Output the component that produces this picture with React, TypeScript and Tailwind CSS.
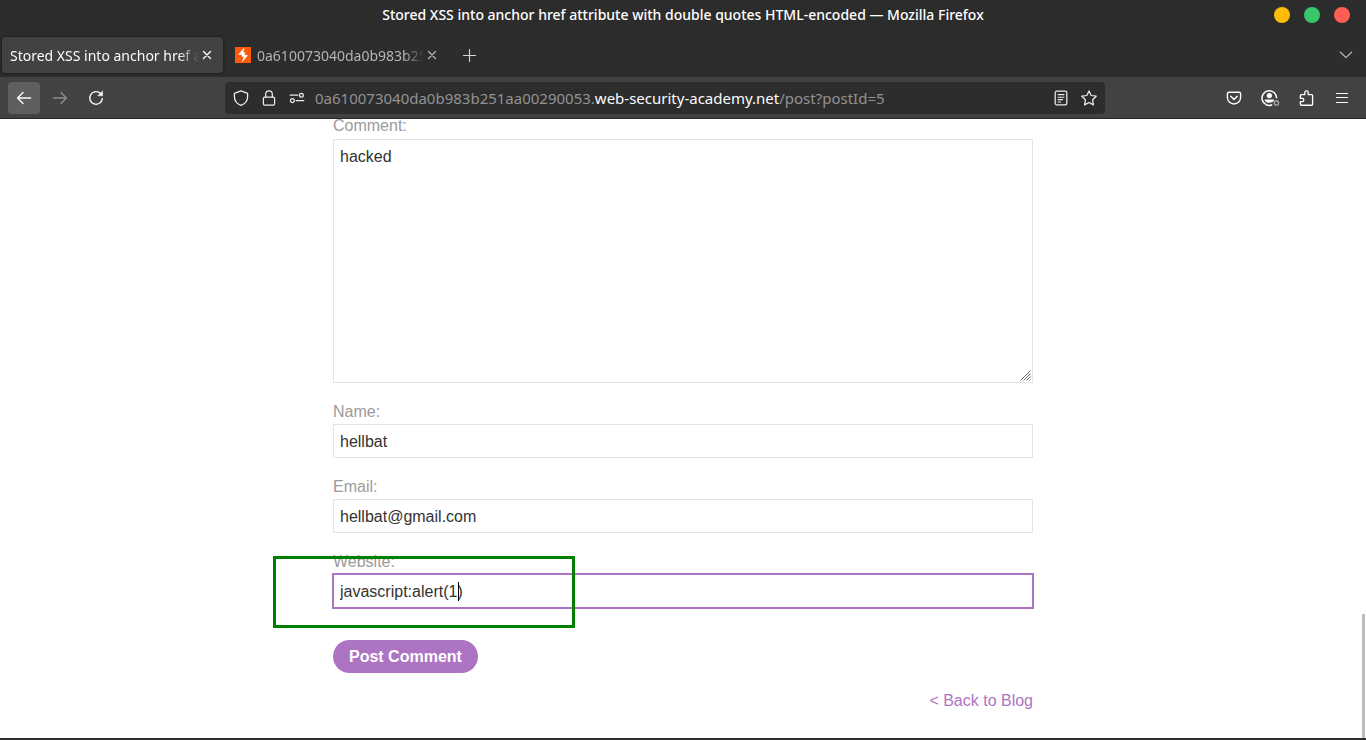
import type { ReactNode } from "react";

const HOST = "0a610073040da0b983b251aa00290053.";

function Icon({ children, size = 16, className = "" }: { children: ReactNode; size?: number; className?: string }) {
  return (
    <svg
      width={size}
      height={size}
      viewBox="0 0 16 16"
      fill="none"
      stroke="currentColor"
      strokeWidth="1.25"
      strokeLinecap="round"
      strokeLinejoin="round"
      className={className}
      aria-hidden="true"
    >
      {children}
    </svg>
  );
}

function CloseIcon() {
  return (
    <Icon>
      <path d="M4.5 4.5l7 7M11.5 4.5l-7 7" strokeWidth="1.4" />
    </Icon>
  );
}

function ToolButton({ label, active, disabled, children }: { label: string; active?: boolean; disabled?: boolean; children: ReactNode }) {
  return (
    <button
      type="button"
      aria-label={label}
      disabled={disabled}
      className={`flex size-8 shrink-0 items-center justify-center rounded ${active ? "bg-[#5f5f5f]" : ""} ${disabled ? "text-[#8c8c8c]" : "text-[#fbfbfe]"}`}
    >
      {children}
    </button>
  );
}

function UrlButton({ label, children }: { label: string; children: ReactNode }) {
  return (
    <button type="button" aria-label={label} className="flex h-7 w-7 shrink-0 items-center justify-center text-[#ececec]">
      {children}
    </button>
  );
}

function Tab({ title, active, icon }: { title: string; active?: boolean; icon?: ReactNode }) {
  return (
    <div
      className={`flex h-9 w-[221px] items-center rounded pl-2 pr-2 ${active ? "bg-[#424242] text-[#fbfbfe] shadow-[0_0_3px_rgba(0,0,0,0.6)]" : "text-[#b4b4b4]"}`}
    >
      {icon}
      <button
        type="button"
        className="min-w-0 flex-1 overflow-hidden pt-[2px] text-left whitespace-nowrap [mask-image:linear-gradient(to_right,black_calc(100%-20px),transparent)]"
      >
        {title}
      </button>
      <button type="button" aria-label="Close tab" className="shrink-0">
        <CloseIcon />
      </button>
    </div>
  );
}

function TitleBar() {
  return (
    <div className="relative flex h-[33px] items-center justify-center bg-[#2c2c2c] pb-1">
      <h1 className="text-[14px] leading-5 font-medium text-white">
        Stored XSS into anchor href attribute with double quotes HTML-encoded — Mozilla Firefox
      </h1>
      <div className="absolute top-[7px] right-4 flex gap-[14px]">
        <button type="button" aria-label="Minimize" className="size-4 rounded-full bg-[#febc08]" />
        <button type="button" aria-label="Maximize" className="size-4 rounded-full bg-[#38c768]" />
        <button type="button" aria-label="Close" className="size-4 rounded-full bg-[#ff5f52]" />
      </div>
    </div>
  );
}

function TabStrip() {
  return (
    <div className="flex h-11 items-center bg-[#2d2d2d] pl-[2px] pr-1 text-[14px] leading-5">
      <div className="flex gap-1">
        <Tab title="Stored XSS into anchor href attribute" active />
        <Tab
          title="0a610073040da0b983b251aa00290053"
          icon={
            <svg width="16" height="16" viewBox="0 0 16 16" className="mr-[6px] shrink-0" aria-hidden="true">
              <path fill="#ff5a0a" d="M0 0h16v16H0z" />
              <path fill="#fff" d="M9.6 0.6L3 7.4l3.8.6-.4 1.4h2.2L6.8 15.4 13 8.2 9.2 7.6l1.2-2.4H8.2z" />
            </svg>
          }
        />
      </div>
      <button type="button" aria-label="New tab" className="ml-[5px] flex size-8 items-center justify-center text-[#d8d8d8]">
        <Icon>
          <path d="M8.5 2.5v12M2.5 8.5h12" strokeWidth="1.1" />
        </Icon>
      </button>
      <button type="button" aria-label="List all tabs" className="ml-auto flex size-8 items-center justify-center text-[#b8b8b8]">
        <Icon>
          <path d="M2.4 5.2L8 10.6l5.6-5.4" />
        </Icon>
      </button>
    </div>
  );
}

function NavBar() {
  return (
    <div className="flex h-[42px] items-center border-b border-[#262626] bg-[#424242] px-2">
      <div className="flex gap-1">
        <ToolButton label="Back" active>
          <Icon>
            <path d="M14.6 8H1.6M7 2.6L1.6 8 7 13.4" strokeWidth="1.4" />
          </Icon>
        </ToolButton>
        <ToolButton label="Forward" disabled>
          <Icon>
            <path d="M1.4 8h13M9 2.6L14.4 8 9 13.4" strokeWidth="1.4" />
          </Icon>
        </ToolButton>
        <ToolButton label="Reload">
          <Icon>
            <path d="M12.6 3.6A6.3 6.3 0 1 0 14.3 8.6" strokeWidth="1.4" />
            <path d="M14.6 1.2v4.6H10z" fill="currentColor" strokeWidth="0.5" />
          </Icon>
        </ToolButton>
      </div>
      <div className="mx-[113px] flex h-8 min-w-0 flex-1 items-center rounded bg-[#2d2d2d] px-[2px]">
        <UrlButton label="Tracking protection">
          <Icon>
            <path d="M8 0.8l6.6 2.5v3.1c0 4-2.2 7.2-6.6 9-4.4-1.8-6.6-5-6.6-9V3.3z" />
          </Icon>
        </UrlButton>
        <UrlButton label="Site security">
          <Icon>
            <rect x="2.4" y="7" width="11.2" height="8.2" rx="1.4" />
            <path d="M4.7 7V4.2a3.3 3.3 0 0 1 6.6 0V7" />
          </Icon>
        </UrlButton>
        <UrlButton label="Permissions">
          <Icon>
            <path d="M1.2 5.2h7.6M7.2 10.6h7.6" />
            <circle cx="12.4" cy="5.2" r="1.9" />
            <circle cx="3.4" cy="10.6" r="1.9" />
          </Icon>
        </UrlButton>
        <div
          role="textbox"
          aria-label="Address"
          contentEditable
          suppressContentEditableWarning
          className="ml-1 min-w-0 flex-1 overflow-hidden text-[15px] leading-5 whitespace-nowrap text-[#929292] outline-none"
        >
          {HOST}
          <span className="text-[#fbfbfe]">web-security-academy.net</span>/post?postId=5
        </div>
        <UrlButton label="Reader view">
          <Icon>
            <rect x="2.2" y="1.2" width="11.6" height="13.6" rx="1.6" />
            <path d="M5 4.6h6M5 7.2h6M5 9.6h4.6M5 12h2.6" strokeWidth="1.1" />
          </Icon>
        </UrlButton>
        <UrlButton label="Bookmark this page">
          <Icon>
            <path d="M8 0.9l2.2 4.6 5 .7-3.6 3.6.8 5.1L8 12.5l-4.4 2.4.8-5.1L.8 6.2l5-.7z" />
          </Icon>
        </UrlButton>
      </div>
      <div className="flex gap-1">
        <ToolButton label="Save to Pocket">
          <Icon>
            <path d="M3 2.2h10a1.6 1.6 0 0 1 1.6 1.6v3.6a6.6 6.6 0 0 1-13.2 0V3.8A1.6 1.6 0 0 1 3 2.2z" strokeWidth="1.4" />
            <path d="M4.7 6.2L8 9.4l3.3-3.2" strokeWidth="1.5" />
          </Icon>
        </ToolButton>
        <ToolButton label="Account">
          <svg width="20" height="18" viewBox="0 0 20 18" fill="none" stroke="currentColor" aria-hidden="true">
            <path d="M16.6 9.4A7.3 7.3 0 1 0 12.2 15.8" strokeWidth="1.5" />
            <circle cx="9.4" cy="6.6" r="2.7" fill="currentColor" stroke="none" />
            <path d="M4.8 10.6h9.2v.6A4.8 3.6 0 0 1 4.8 11.2z" fill="currentColor" stroke="none" />
            <circle cx="16.4" cy="14" r="2.2" strokeWidth="1.2" className="text-[#b5b5b5]" stroke="currentColor" />
          </svg>
        </ToolButton>
        <ToolButton label="Extensions">
          <Icon>
            <path
              d="M2.4 7V5.5a.9.9 0 0 1 .9-.9h3.5V2.6a1.7 1.7 0 0 1 3.4 0v2h3.5a.9.9 0 0 1 .9.9v8.8a.9.9 0 0 1-.9.9H3.3a.9.9 0 0 1-.9-.9v-2.7h1.8a1.6 1.6 0 0 0 0-3.2H2.4z"
              strokeWidth="1.35"
            />
          </Icon>
        </ToolButton>
        <ToolButton label="Open menu">
          <Icon>
            <path d="M2.5 3.5h11M2.5 7.5h11M2.5 12.5h11" strokeWidth="1.2" />
          </Icon>
        </ToolButton>
      </div>
    </div>
  );
}

const inputClass =
  "block h-[34px] w-full border border-[#e4e4e4] bg-white px-[6px] pt-[2px] text-base text-[#333332] outline-none";
const labelClass = "mb-[2px] block text-base leading-5 text-[#9b9b9b]";

function CommentForm() {
  return (
    <form className="flex flex-col gap-[19px]" onSubmit={(e) => e.preventDefault()}>
      <div className="relative">
        <label htmlFor="comment" className="mb-[3px] block text-base leading-5 text-[#9b9b9b]">
          Comment:
        </label>
        <textarea
          id="comment"
          defaultValue="hacked"
          className="block h-[244px] w-full resize-none border border-[#e4e4e4] bg-white px-[6px] py-[7px] text-base leading-5 text-[#333332] outline-none"
        />
        <svg width="11" height="11" viewBox="0 0 11 11" className="pointer-events-none absolute right-[2px] bottom-[2px]" stroke="#666" aria-hidden="true">
          <path d="M0.5 10.5l10-10M3.5 10.5l7-7M6.5 10.5l4-4M9.5 10.5l1-1" />
        </svg>
      </div>
      <div>
        <label htmlFor="name" className={labelClass}>
          Name:
        </label>
        <input id="name" type="text" defaultValue="hellbat" className={inputClass} />
      </div>
      <div>
        <label htmlFor="email" className={labelClass}>
          Email:
        </label>
        <input id="email" type="email" defaultValue="hellbat@gmail.com" className={inputClass} />
      </div>
      <div className="relative">
        <label htmlFor="website" className={labelClass}>
          Website:
        </label>
        <input
          id="website"
          type="text"
          defaultValue="javascript:alert(1)"
          className="block h-[34px] w-full border border-[#ad74c3] bg-white px-[6px] pt-[2px] text-base text-[#333332] shadow-[0_0_0_1px_#ad74c3] outline-none"
        />
        <span className="pointer-events-none absolute bottom-[7px] left-[125px] h-[19px] w-px bg-black" />
        <span className="pointer-events-none absolute top-1 -left-[60px] h-[72px] w-[302px] border-3 border-[#008000]" />
      </div>
      <button type="submit" className="mt-[13px] h-[33px] self-start rounded-full bg-[#ad74c3] px-4 text-base font-bold text-white">
        Post Comment
      </button>
    </form>
  );
}

export default function App() {
  return (
    <div className="flex h-screen flex-col overflow-hidden bg-white">
      <header className="shrink-0 font-['Noto_Sans',sans-serif]">
        <TitleBar />
        <TabStrip />
        <NavBar />
      </header>
      <main className="relative flex min-h-0 flex-1 flex-col justify-end overflow-hidden border-b-2 border-[#2d2d2d] px-6 pb-[27px] font-['Liberation_Sans',sans-serif]">
        <div className="mx-auto w-full max-w-[700px]">
          <CommentForm />
          <div className="mt-[18px] text-right text-base leading-5">
            <a href="#blog" className="text-[#ad74c3]">
              &lt; Back to Blog
            </a>
          </div>
        </div>
        <div className="absolute right-[1px] bottom-0 h-[124px] w-[3px] bg-[#bdbdbd]" />
      </main>
    </div>
  );
}
